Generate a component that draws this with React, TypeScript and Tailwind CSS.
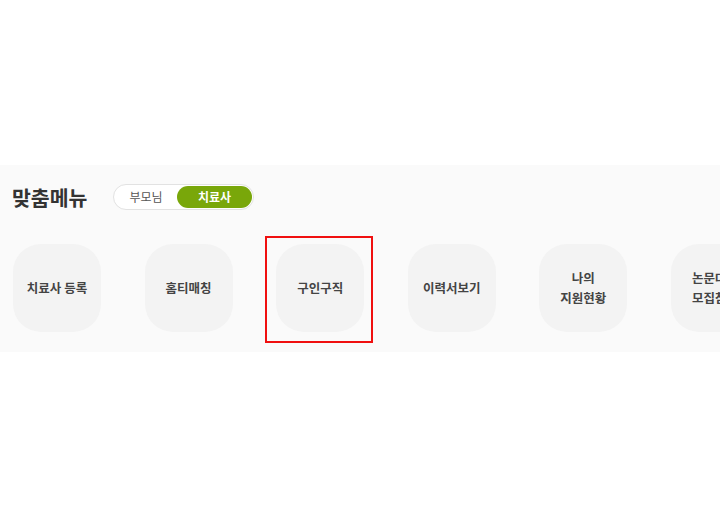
import React from "react";

const menus: string[][] = [
  ["치료사 등록"],
  ["홈티매칭"],
  ["구인구직"],
  ["이력서보기"],
  ["나의", "지원현황"],
  ["논문대회", "모집참여"],
];

export default function App() {
  return (
    <div
      className="relative h-[520px] w-[720px] overflow-hidden bg-white"
      style={{ fontFamily: '"Noto Sans CJK KR", "Noto Sans", sans-serif' }}
    >
      <section className="mt-[165px] h-[187px] overflow-hidden bg-[#fafafa] pl-[12px] pt-[19px]">
        {/* header */}
        <div className="flex h-[26px] items-center">
          <h2 className="w-[101px] text-[20.5px] font-bold leading-none text-[#333]">
            맞춤메뉴
          </h2>
          <div className="flex h-[26px] w-[141px] items-center rounded-full border border-[#e2e2e2] bg-white p-[1px]">
            <button className="flex h-full flex-1 items-center justify-center text-[12px] text-[#555]">
              부모님
            </button>
            <button className="flex h-full w-[75px] items-center justify-center rounded-full bg-[#79a70a] text-[12px] font-bold text-white">
              치료사
            </button>
          </div>
        </div>

        {/* menu cards */}
        <div className="mt-[34px] flex gap-[43.6px] pl-[1px]">
          {menus.map((lines) => (
            <div
              key={lines.join("")}
              className="flex h-[88px] w-[88px] shrink-0 flex-col items-center justify-center rounded-[28px] bg-[#f3f3f3] text-center text-[12.5px] font-semibold leading-[20px] text-[#444]"
            >
              {lines.map((l) => (
                <span key={l} className="whitespace-nowrap">
                  {l}
                </span>
              ))}
            </div>
          ))}
        </div>
      </section>

      {/* highlight box */}
      <div className="pointer-events-none absolute left-[265px] top-[236px] h-[107px] w-[108px] border-2 border-[#f01010]" />
    </div>
  );
}
